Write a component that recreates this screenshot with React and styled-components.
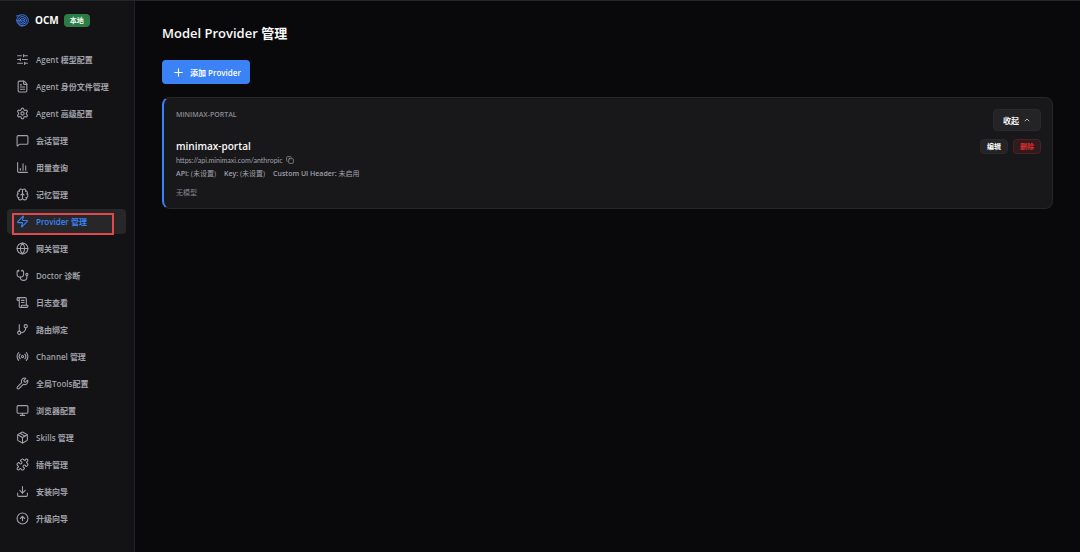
import React from "react";
import styled, { createGlobalStyle } from "styled-components";
import {
  Brain,
  ChartColumn,
  ChevronUp,
  CircleArrowUp,
  Copy,
  Download,
  FileText,
  GitBranch,
  Globe,
  MessageSquare,
  Monitor,
  Package,
  Plus,
  Puzzle,
  Radio,
  ScrollText,
  Settings,
  SlidersHorizontal,
  Stethoscope,
  Wrench,
  Zap,
} from "lucide-react";

const GlobalStyle = createGlobalStyle`
  * {
    box-sizing: border-box;
  }

  body {
    margin: 0;
    background: #09090b;
    color: #fafafa;
    font-family: "Open Sans", "Noto Sans CJK SC", sans-serif;
    font-size: 8px;
  }

  button {
    font-family: inherit;
    cursor: pointer;
  }
`;

const Layout = styled.div`
  display: flex;
  min-height: 100vh;
  border-top: 1px solid #242629;
`;

const Sidebar = styled.aside`
  flex: none;
  width: 135px;
  padding: 11px 8px 0 7px;
  background: #131315;
  border-right: 1px solid #222226;
`;

const Brand = styled.div`
  display: flex;
  align-items: center;
  height: 16px;
  margin-bottom: 19px;
  padding-left: 9px;
`;

const BrandName = styled.span`
  margin-left: 6px;
  font-size: 10px;
  font-weight: 700;
`;

const Tag = styled.span`
  margin-left: 5px;
  padding: 0 6px;
  border-radius: 4px;
  background: #2b7d45;
  font-size: 7px;
  font-weight: 700;
  line-height: 13px;
`;

const Nav = styled.nav`
  display: flex;
  flex-direction: column;
  gap: 2px;
`;

const NavLink = styled.a`
  position: relative;
  display: flex;
  align-items: center;
  gap: 7px;
  height: 25px;
  padding: 0 9px;
  border-radius: 4px;
  background: ${({ $active }) => ($active ? "#27272a" : "transparent")};
  color: ${({ $active }) => ($active ? "#3b82f6" : "#a1a1aa")};
  font-weight: 600;
  text-decoration: none;
  white-space: nowrap;
`;

const Marker = styled.span`
  position: absolute;
  inset: 4px 12px -1px 5px;
  border: 2px solid #e0484c;
`;

const Main = styled.main`
  flex: 1;
  min-width: 0;
  padding: 22px 27px;
`;

const Title = styled.h1`
  margin: 0 0 17px;
  font-size: 13px;
  font-weight: 600;
  line-height: 20px;
`;

const AddButton = styled.button`
  display: flex;
  align-items: center;
  gap: 5px;
  height: 24px;
  margin-bottom: 13px;
  padding: 0 9px 0 10px;
  border: 0;
  border-radius: 4px;
  background: #3b82f6;
  color: #fff;
  font-size: 8px;
  font-weight: 600;
`;

const Card = styled.section`
  padding: 11px 11px 8px 12px;
  border: 1px solid #27272a;
  border-left: 2px solid #3b82f6;
  border-radius: 8px;
  background: #18181b;
`;

const Row = styled.div`
  display: flex;
  justify-content: space-between;
  align-items: flex-start;
`;

const GroupName = styled.span`
  color: #8b8b93;
  font-size: 7px;
  font-weight: 600;
  line-height: 12px;
  text-transform: uppercase;
`;

const ToggleButton = styled.button`
  display: flex;
  align-items: center;
  gap: 4px;
  height: 22px;
  padding: 0 9px;
  border: 1px solid #29292d;
  border-radius: 4px;
  background: #242427;
  color: #fafafa;
  font-size: 8px;
  font-weight: 700;
`;

const ProviderRow = styled(Row)`
  margin-top: 8px;
`;

const Details = styled.div`
  color: #a1a1aa;
  font-size: 7px;
  line-height: 14px;
`;

const ProviderName = styled.h2`
  margin: 0;
  color: #fafafa;
  font-size: 10px;
  font-weight: 600;
  line-height: 14px;
`;

const Url = styled.div`
  display: flex;
  align-items: center;
  gap: 3px;
  font-family: Lato, sans-serif;
`;

const CopyButton = styled.button`
  display: flex;
  padding: 0;
  border: 0;
  background: none;
  color: inherit;
`;

const Meta = styled.div`
  display: flex;
  gap: 8px;
`;

const MetaLabel = styled.span`
  font-weight: 600;
`;

const Empty = styled.div`
  margin-top: 5px;
  color: #85858d;
`;

const Actions = styled.div`
  display: flex;
  gap: 5px;
`;

const SmallButton = styled.button`
  height: 15px;
  padding: 0 6px;
  border: 1px solid ${({ $danger }) => ($danger ? "#4d2024" : "#29292d")};
  border-radius: 4px;
  background: ${({ $danger }) => ($danger ? "#301a1d" : "#242427")};
  color: ${({ $danger }) => ($danger ? "#dc2f2f" : "#fafafa")};
  font-size: 7px;
  font-weight: 700;
  line-height: 13px;
`;

const navItems = [
  { label: "Agent 模型配置", icon: SlidersHorizontal },
  { label: "Agent 身份文件管理", icon: FileText },
  { label: "Agent 高级配置", icon: Settings },
  { label: "会话管理", icon: MessageSquare },
  { label: "用量查询", icon: ChartColumn },
  { label: "记忆管理", icon: Brain },
  { label: "Provider 管理", icon: Zap, active: true },
  { label: "网关管理", icon: Globe },
  { label: "Doctor 诊断", icon: Stethoscope },
  { label: "日志查看", icon: ScrollText },
  { label: "路由绑定", icon: GitBranch },
  { label: "Channel 管理", icon: Radio },
  { label: "全局Tools配置", icon: Wrench },
  { label: "浏览器配置", icon: Monitor },
  { label: "Skills 管理", icon: Package },
  { label: "插件管理", icon: Puzzle },
  { label: "安装向导", icon: Download },
  { label: "升级向导", icon: CircleArrowUp },
];

function Logo() {
  return (
    <svg width="13" height="13" viewBox="0 0 26 26" fill="none" stroke="#4080f0" strokeWidth="1.9" strokeLinecap="round">
      <path d="M1 4c3 0 4-1 6-2" />
      <path d="M1.500 13a11.500 11.500 0 0 1 23 0a10.500 10.500 0 0 1-21 0M1.500 13a11.500 11.500 0 0 0 11.500 11.500M5 13a8 8 0 0 1 16 0a7.200 7.200 0 0 1-14.400 0M8.500 13a4.500 4.500 0 0 1 9 0a3.800 3.800 0 0 1-7.600 0M12 13a1.500 1.500 0 0 1 3 0" />
    </svg>
  );
}

function App() {
  return (
    <>
      <GlobalStyle />
      <Layout>
        <Sidebar>
          <Brand>
            <Logo />
            <BrandName>OCM</BrandName>
            <Tag>本地</Tag>
          </Brand>
          <Nav>
            {navItems.map(({ label, icon: Icon, active }) => (
              <NavLink key={label} href="#" $active={active} aria-current={active ? "page" : undefined}>
                <Icon size={13} strokeWidth={2} />
                {label}
                {active && <Marker />}
              </NavLink>
            ))}
          </Nav>
        </Sidebar>
        <Main>
          <Title>Model Provider 管理</Title>
          <AddButton type="button">
            <Plus size={13} />
            添加 Provider
          </AddButton>
          <Card>
            <Row>
              <GroupName>minimax-portal</GroupName>
              <ToggleButton type="button">
                收起
                <ChevronUp size={8} />
              </ToggleButton>
            </Row>
            <ProviderRow>
              <Details>
                <ProviderName>minimax-portal</ProviderName>
                <Url>
                  https://api.minimaxi.com/anthropic
                  <CopyButton type="button" aria-label="复制">
                    <Copy size={8} />
                  </CopyButton>
                </Url>
                <Meta>
                  <span>
                    <MetaLabel>API:</MetaLabel> (未设置)
                  </span>
                  <span>
                    <MetaLabel>Key:</MetaLabel> (未设置)
                  </span>
                  <span>
                    <MetaLabel>Custom UI Header:</MetaLabel> 未启用
                  </span>
                </Meta>
                <Empty>无模型</Empty>
              </Details>
              <Actions>
                <SmallButton type="button">编辑</SmallButton>
                <SmallButton type="button" $danger>
                  删除
                </SmallButton>
              </Actions>
            </ProviderRow>
          </Card>
        </Main>
      </Layout>
    </>
  );
}

export default App;
